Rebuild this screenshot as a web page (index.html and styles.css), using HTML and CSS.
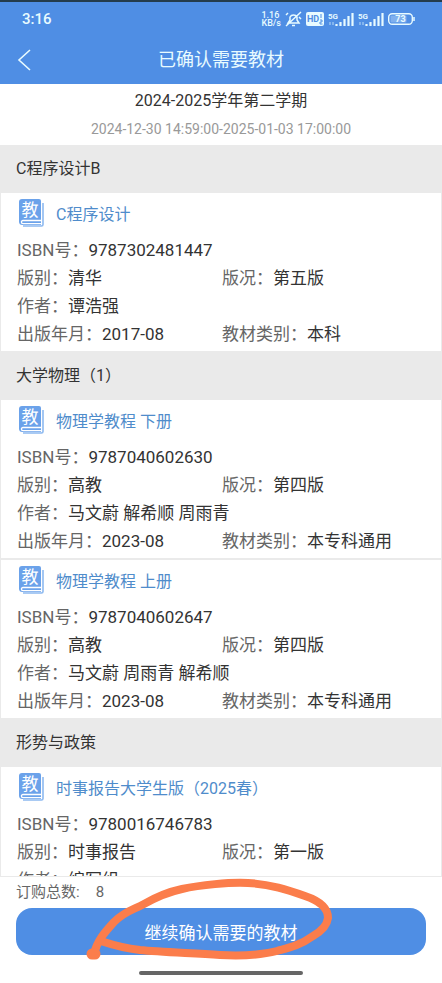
FILE: index.html
```html
<!DOCTYPE html>
<html lang="zh-CN">
<head>
<meta charset="utf-8">
<meta name="viewport" content="width=device-width, initial-scale=1">
<title>已确认需要教材</title>
<link rel="stylesheet" href="styles.css">
</head>
<body>
<svg class="defs" width="0" height="0" aria-hidden="true">
  <symbol id="book" viewBox="0 0 26 28">
    <path d="M24 4V25.500a1.500 1.500 0 0 1-1.500 1.500H4" fill="none" stroke="#8db9f0" stroke-width="1.600"/>
    <path d="M3 0h17a2 2 0 0 1 2 2v24H3.500A3.500 3.500 0 0 1 0 22.500V3a3 3 0 0 1 3-3z" fill="#6ba2ea"/>
    <path d="M22 21.500H4a1.500 1.500 0 0 0 0 3.200H22" fill="none" stroke="#fff" stroke-width="1.300"/>
    <text x="11" y="17" text-anchor="middle" class="book-char">教</text>
  </symbol>
  <symbol id="signal" viewBox="0 0 26 15">
    <text x="0" y="7" class="net">5G</text>
    <path d="M8.500 12v2M12.500 10v4M16.500 7v7M20.500 4v10M24.500 1v13" stroke="#e8fbff" stroke-width="2.200"/>
    <path d="M2 10v3M5 10v3" stroke="#b9dcf8" stroke-width="1"/>
  </symbol>
</svg>
<header class="top">
  <div class="status">
    <span class="clock">3:16</span>
    <div class="indicators">
      <span class="speed">1.16<br>KB/s</span>
      <svg width="17" height="16" viewBox="0 0 17 16" fill="none" stroke="#e8fbff" stroke-width="1.500"><path d="M3 12h11l-2-3V6a4 4 0 0 0-7 0v3zM7 14.500h3M1 15 16 1M1 4l2-2M16 8l-2-2"/></svg>
      <svg width="18" height="14" viewBox="0 0 18 14"><rect width="18" height="14" rx="2" fill="#e8fbff"/><text x="1" y="10" class="hd">HD</text><path d="M15 2v4M14 8h2v2h-2v2h2.500" fill="none" stroke="#4f8ee4"/></svg>
      <svg width="26" height="15"><use href="#signal"/></svg>
      <svg width="26" height="15"><use href="#signal"/></svg>
      <svg width="27" height="12" viewBox="0 0 27 12"><rect x=".7" y=".7" width="23.600" height="10.600" rx="3.500" fill="none" stroke="#e8fbff" stroke-width="1.400"/><rect x="2.500" y="2.500" width="16" height="7" rx="1" fill="#7fb0ee"/><path d="M26 4v4" stroke="#e8fbff" stroke-width="1.500"/><text x="12.500" y="9" text-anchor="middle" class="bat">73</text></svg>
    </div>
  </div>
  <div class="navbar">
    <button class="back" aria-label="返回"><svg width="14" height="22" viewBox="0 0 14 22" fill="none" stroke="#e8fbff" stroke-width="1.600"><path d="M13 1 2 11l11 10"/></svg></button>
    <h1>已确认需要教材</h1>
  </div>
</header>
<section class="term">
  <p class="term-name">2024-2025学年第二学期</p>
  <p class="term-time">2024-12-30 14:59:00-2025-01-03 17:00:00</p>
</section>
<main class="list">
  <h2>C程序设计B</h2>
  <article class="card">
    <h3><svg width="26" height="28"><use href="#book"/></svg>C程序设计</h3>
    <dl>
      <div class="wide"><dt>ISBN号：</dt><dd>9787302481447</dd></div>
      <div><dt>版别：</dt><dd>清华</dd></div>
      <div><dt>版况：</dt><dd>第五版</dd></div>
      <div class="wide"><dt>作者：</dt><dd>谭浩强</dd></div>
      <div><dt>出版年月：</dt><dd>2017-08</dd></div>
      <div><dt>教材类别：</dt><dd>本科</dd></div>
    </dl>
  </article>
  <h2>大学物理（1）</h2>
  <article class="card">
    <h3><svg width="26" height="28"><use href="#book"/></svg>物理学教程 下册</h3>
    <dl>
      <div class="wide"><dt>ISBN号：</dt><dd>9787040602630</dd></div>
      <div><dt>版别：</dt><dd>高教</dd></div>
      <div><dt>版况：</dt><dd>第四版</dd></div>
      <div class="wide"><dt>作者：</dt><dd>马文蔚 解希顺 周雨青</dd></div>
      <div><dt>出版年月：</dt><dd>2023-08</dd></div>
      <div><dt>教材类别：</dt><dd>本专科通用</dd></div>
    </dl>
  </article>
  <article class="card">
    <h3><svg width="26" height="28"><use href="#book"/></svg>物理学教程 上册</h3>
    <dl>
      <div class="wide"><dt>ISBN号：</dt><dd>9787040602647</dd></div>
      <div><dt>版别：</dt><dd>高教</dd></div>
      <div><dt>版况：</dt><dd>第四版</dd></div>
      <div class="wide"><dt>作者：</dt><dd>马文蔚 周雨青 解希顺</dd></div>
      <div><dt>出版年月：</dt><dd>2023-08</dd></div>
      <div><dt>教材类别：</dt><dd>本专科通用</dd></div>
    </dl>
  </article>
  <h2>形势与政策</h2>
  <article class="card">
    <h3><svg width="26" height="28"><use href="#book"/></svg>时事报告大学生版（2025春）</h3>
    <dl>
      <div class="wide"><dt>ISBN号：</dt><dd>9780016746783</dd></div>
      <div><dt>版别：</dt><dd>时事报告</dd></div>
      <div><dt>版况：</dt><dd>第一版</dd></div>
      <div class="wide"><dt>作者：</dt><dd>编写组</dd></div>
    </dl>
  </article>
</main>
<footer class="bottom">
  <p class="total">订购总数:<span>8</span></p>
  <div class="action">
    <button class="confirm">继续确认需要的教材</button>
    <svg class="mark" width="270" height="88" viewBox="0 0 270 88" fill="none" stroke="#fb7d4b" stroke-linecap="round" stroke-linejoin="round" aria-hidden="true">
      <path stroke-width="8" d="M14 77C17 64 24 56 34 45C45 34 53 33 64 27C78 19 88 15 102 12C120 8 150 5 168 6C190 7 208 13 225 19C240 24 248 32 248 41C247 49 240 55 233 59C219 69 208 71 197 74C178 79 160 79 140 78C110 76 80 75 60 73C44 71 33 68 24 65"/>
      <path stroke-width="11" d="M12 77h3"/>
    </svg>
  </div>
  <div class="home"></div>
</footer>
</body>
</html>
```
FILE: styles.css
```css
* { box-sizing: border-box; }
body, h1, h2, h3, p, dl, dd { margin: 0; font-weight: 400; }
body {
  height: 100vh;
  display: flex;
  flex-direction: column;
  overflow: hidden;
  background: #fff;
  color: #333;
  font-family: Roboto, "Noto Sans CJK SC", sans-serif;
}
button { border: 0; padding: 0; font: inherit; cursor: pointer; }
.defs { display: none; }
.top {
  flex: none;
  background: #4f8ee4;
  border-top: 2px solid #243c4c;
  color: #e8fbff;
}
.status {
  height: 34px;
  padding: 0 27px 0 22px;
  display: flex;
  align-items: center;
  justify-content: space-between;
}
.clock { font-size: 15px; font-weight: 500; }
.indicators { display: flex; align-items: center; gap: 4px; }
.speed { font-size: 9px; line-height: 8px; font-weight: 500; }
.net { font: 700 8px Roboto, sans-serif; fill: #e8fbff; }
.hd { font: 700 9px Roboto, sans-serif; fill: #4f8ee4; }
.bat { font: 700 9px Roboto, sans-serif; fill: #e8fbff; }
.book-char { font: 400 17px "Noto Sans CJK SC", sans-serif; fill: #fff; }
.navbar {
  height: 48px;
  display: grid;
  grid-template-columns: 48px 1fr 48px;
  align-items: center;
}
.back { background: none; display: flex; justify-content: center; }
.navbar h1 { font-size: 18px; line-height: 24px; text-align: center; padding-bottom: 0; }
.term {
  flex: none;
  padding: 4px 0;
  text-align: center;
}
.term-name { font-size: 16px; line-height: 26px; }
.term-time { font-size: 14px; line-height: 27px; padding-top: 2px; height: 27px; color: #999; }
.list {
  flex: 1;
  min-height: 0;
  overflow: hidden;
}
.list h2 {
  padding: 0 16px;
  font-size: 16px;
  line-height: 48px;
  background: #eaeaea;
}
.card {
  padding-bottom: 3px;
  border: 1px solid #eaeaea;
  border-top: 0;
}
.card + .card { border-top: 1px solid #eaeaea; }
.card h3 {
  height: 43px;
  padding: 0 0 3px 18px;
  display: flex;
  align-items: center;
  gap: 11px;
  font-size: 16px;
  color: #4f8ccb;
}
.card dl {
  padding-left: 16px;
  display: grid;
  grid-template-columns: 205px 1fr;
  font-size: 17px;
  line-height: 28px;
}
.card dl div { display: flex; }
.card .wide { grid-column: 1 / -1; }
.card dt { color: #666; }
.bottom {
  flex: none;
  padding: 0 16px 8px;
  border-top: 1px solid #eaeaea;
}
.total { font-size: 15px; line-height: 31px; color: #666; }
.total span { padding-left: 16px; }
.action { position: relative; }
.confirm {
  display: block;
  width: 100%;
  height: 47px;
  border-radius: 16px;
  background: #4f8ee4;
  color: #fff;
  font-size: 17px;
}
.mark { position: absolute; left: 64px; bottom: -10px; pointer-events: none; }
.home {
  width: 164px;
  height: 4px;
  margin: 16px auto 0;
  border-radius: 2px;
  background: #666;
}
```
